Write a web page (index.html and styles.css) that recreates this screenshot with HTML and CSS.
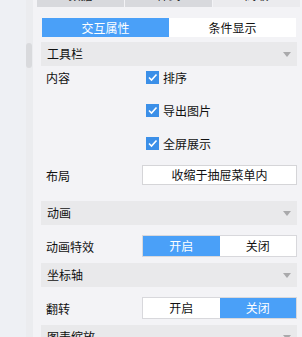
FILE: index.html
```html
<!DOCTYPE html>
<html lang="zh">
<head>
<meta charset="utf-8">
<title>组件设置</title>
<link rel="stylesheet" href="styles.css">
</head>
<body>
<div class="page">
  <div class="gutter"></div>
  <div class="track"><div class="thumb"></div></div>
  <div class="panel">
    <!-- top tabs, scrolled mostly out of view -->
    <div class="tabs">
      <div class="tab">数据</div>
      <div class="tab">样式</div>
      <div class="tab tabActive">高级</div>
    </div>

    <div class="segment">
      <div class="segItem segOn">交互属性</div>
      <div class="segItem">条件显示</div>
    </div>

    <div class="section">
      <div class="secHead">工具栏<span class="arrow"></span></div>
      <div class="secBody first">
        <div class="row checkRow">
          <div class="label">内容</div>
          <div class="control"><span class="check"><svg width="13" height="13" viewBox="0 0 13 13"><rect width="13" height="13" fill="#3b8fe8"/><path d="M3 6.5 L5.5 9 L10.5 3.5" stroke="#fff" stroke-width="1.6" fill="none"/></svg></span>排序</div>
        </div>
        <div class="row checkRow">
          <div class="label"></div>
          <div class="control"><span class="check"><svg width="13" height="13" viewBox="0 0 13 13"><rect width="13" height="13" fill="#3b8fe8"/><path d="M3 6.5 L5.5 9 L10.5 3.5" stroke="#fff" stroke-width="1.6" fill="none"/></svg></span>导出图片</div>
        </div>
        <div class="row checkRow">
          <div class="label"></div>
          <div class="control"><span class="check"><svg width="13" height="13" viewBox="0 0 13 13"><rect width="13" height="13" fill="#3b8fe8"/><path d="M3 6.5 L5.5 9 L10.5 3.5" stroke="#fff" stroke-width="1.6" fill="none"/></svg></span>全屏展示</div>
        </div>
        <div class="row boxRow">
          <div class="label">布局</div>
          <div class="field">收缩于抽屉菜单内</div>
        </div>
      </div>
    </div>

    <div class="section">
      <div class="secHead">动画<span class="arrow"></span></div>
      <div class="secBody">
        <div class="row">
          <div class="label">动画特效</div>
          <div class="toggle">
            <div class="togItem togOn">开启</div>
            <div class="togItem">关闭</div>
          </div>
        </div>
      </div>
    </div>

    <div class="section">
      <div class="secHead">坐标轴<span class="arrow"></span></div>
      <div class="secBody">
        <div class="row">
          <div class="label">翻转</div>
          <div class="toggle">
            <div class="togItem">开启</div>
            <div class="togItem togOn">关闭</div>
          </div>
        </div>
      </div>
    </div>

    <div class="section">
      <div class="secHead">图表缩放<span class="arrow"></span></div>
    </div>
  </div>
</div>
</body>
</html>
```

FILE: styles.css
```css
body {
  margin: 0;
  font-family: "Noto Sans CJK SC", "Noto Sans", sans-serif;
  font-size: 12px;
  color: #111;
  overflow: hidden;
}
.page {
  display: flex;
  height: 337px;
  background-color: #eef0f4;
}
.gutter {
  width: 26px;
}
.track {
  width: 7px;
  background-color: #ebecef;
}
.thumb {
  margin-top: 43px;
  width: 6px;
  height: 25px;
  border-radius: 3px;
  background-color: #d9dadd;
}
.panel {
  flex: 1;
  background-color: #f3f3f6;
  padding: 0 5px 0 8px;
}
.tabs {
  display: flex;
  height: 26px;
  margin: -19px -3px 0 -4px;
  overflow: hidden;
}
.tab {
  flex: 1;
  background-color: #d8d9dd;
  margin-right: 1px;
  text-align: center;
  line-height: 24px;
  padding-top: 2px;
  color: #222;
}
.tabActive {
  background-color: #ebebee;
  margin-right: 0;
}
.segment {
  display: flex;
  height: 19px;
  margin: 11px 1px 0 1px;
  background-color: #fff;
}
.segItem {
  flex: 1;
  text-align: center;
  line-height: 19px;
  font-size: 12px;
}
.segOn {
  background-color: #4aa0f8;
  color: #fff;
}
.segment + .section {
  margin-top: 5px;
}
.secHead {
  position: relative;
  height: 24px;
  line-height: 24px;
  padding-left: 6px;
  background-color: #e9e9eb;
}
.arrow {
  position: absolute;
  right: 6px;
  top: 10px;
  width: 0;
  height: 0;
  border-left: 4px solid transparent;
  border-right: 4px solid transparent;
  border-top: 5px solid #a9a9ab;
}
.secBody {
  padding: 10px 0 6px 0;
}
.secBody.first {
  padding: 4px 0 15px 0;
}
.row {
  display: flex;
  align-items: center;
  height: 22px;
  padding-left: 5px;
}
.checkRow {
  height: 14px;
  margin-bottom: 19px;
}
.boxRow {
  margin-top: -5px;
}
.label {
  width: 96px;
  flex-shrink: 0;
}
.control {
  display: flex;
  align-items: center;
  padding-left: 4px;
}
.check {
  display: inline-flex;
  width: 13px;
  height: 13px;
  margin-right: 4px;
}
.field {
  flex: 1;
  height: 18px;
  line-height: 18px;
  text-align: center;
  background-color: #fff;
  border: 1px solid #d5d5d8;
}
.toggle {
  flex: 1;
  display: flex;
  height: 20px;
  border: 1px solid #d8d8dc;
  background-color: #fff;
}
.togItem {
  flex: 1;
  text-align: center;
  line-height: 20px;
}
.togOn {
  background-color: #4aa0f8;
  color: #fff;
}
```
